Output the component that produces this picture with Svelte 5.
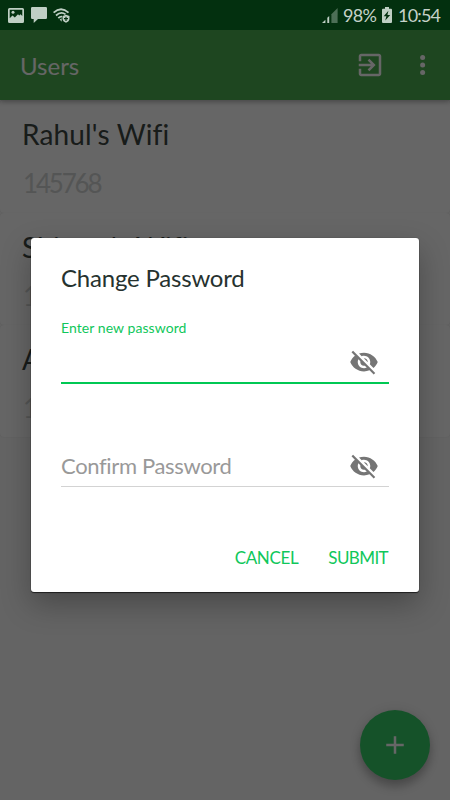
<script lang="ts">
  const users = [
    { name: "Rahul's Wifi", code: '145768' },
    { name: "Shivam's Wifi", code: '145769' },
    { name: "Anil's Wifi", code: '145770' }
  ];

  let password = $state('');
  let confirm = $state('');
</script>

{#snippet eyeOff()}
  <svg class="icon eye" viewBox="0 0 24 24" aria-hidden="true">
    <path d="M12 7c2.76 0 5 2.24 5 5 0 .65-.13 1.26-.36 1.83l2.92 2.92c1.51-1.26 2.7-2.89 3.43-4.75-1.73-4.39-6-7.5-11-7.5-1.4 0-2.74.25-3.98.7l2.16 2.16C10.74 7.13 11.35 7 12 7zM2 4.27l2.28 2.28.46.46C3.08 8.3 1.78 10.02 1 12c1.73 4.39 6 7.5 11 7.5 1.55 0 3.03-.3 4.38-.84l.42.42L19.73 22 21 20.73 3.27 3 2 4.27zM7.53 9.8l1.55 1.55c-.05.21-.08.43-.08.65 0 1.66 1.34 3 3 3 .22 0 .44-.03.65-.08l1.55 1.55c-.67.33-1.41.53-2.2.53-2.76 0-5-2.24-5-5 0-.79.2-1.53.53-2.2zm4.31-.78l3.15 3.15.02-.16c0-1.66-1.34-3-3-3l-.17.01z" />
  </svg>
{/snippet}

<div class="screen">
  <div class="status">
    <svg class="s-image" viewBox="0 0 16 15">
      <path fill-rule="evenodd" d="M1.5 0h13A1.5 1.5 0 0 1 16 1.5v12a1.5 1.5 0 0 1-1.5 1.5h-13A1.5 1.5 0 0 1 0 13.5v-12A1.5 1.5 0 0 1 1.5 0zM1.7 1.7v8.6L4.5 7.6l2.3 2L10 6.2l1.2 1.3 1.3-1.3 1.8 1.9V1.7z" />
      <circle cx="5" cy="4.3" r="1.5" />
    </svg>
    <svg class="s-chat" viewBox="0 0 16 16">
      <path d="M1.2 0h13.6A1.2 1.2 0 0 1 16 1.2v9.6a1.2 1.2 0 0 1-1.2 1.2H7l-4.3 4v-4H1.2A1.2 1.2 0 0 1 0 10.8V1.2A1.2 1.2 0 0 1 1.2 0z" />
    </svg>
    <svg class="s-wifi" viewBox="0 0 17 15">
      <g fill="none" stroke="#bfcfc4" stroke-width="1.8">
        <path d="M.6 4.6Q8-2.2 15.5 4.6" />
        <path d="M3 7.5Q8 3 12.5 6.4" />
        <path d="M5.3 10.2Q7 8.4 9 8.7" />
      </g>
      <path d="M6.7 11.5l2-1.2v3.5z" />
      <path fill-rule="evenodd" d="M13 6.8l3.5 1.2v2.8c0 2-1.5 3.3-3.5 4-2-.7-3.5-2-3.5-4V8zM12.4 8.7v1.4H11v1.2h1.4v1.6h1.2v-1.6H15v-1.2h-1.4V8.7z" />
    </svg>

    <div class="status-right">
      <svg class="s-signal" viewBox="0 0 16 15">
        <path d="M0 15l3.4-3.3V15zM5.3 15V9.8l1.9-1.9V15z" />
        <path opacity=".4" d="M9.4 15V6.2L15.6 0v15z" />
      </svg>
      <span class="level">98%</span>
      <svg class="s-battery" viewBox="0 0 10 16">
        <path fill-rule="evenodd" d="M3 0h4v1.7h2a1 1 0 0 1 1 1V15a1 1 0 0 1-1 1H1a1 1 0 0 1-1-1V2.7a1 1 0 0 1 1-1h2zM6.4 3.8L1.7 9.3h2.7l-1.2 4.3 5-5.7H5.4z" />
      </svg>
      <span class="clock">10:54</span>
    </div>
  </div>

  <header class="toolbar">
    <h1>Users</h1>
    <svg class="icon" viewBox="0 0 24 24">
      <path d="M10.09 15.59L11.5 17l5-5-5-5-1.41 1.41L12.67 11H3v2h9.67l-2.58 2.59zM19 3H5c-1.11 0-2 .9-2 2v4h2V5h14v14H5v-4H3v4c0 1.1.89 2 2 2h14c1.1 0 2-.9 2-2V5c0-1.1-.9-2-2-2z" />
    </svg>
    <svg class="icon more" viewBox="0 0 24 24">
      <circle cx="11.7" cy="6" r="2" />
      <circle cx="11.7" cy="12" r="2" />
      <circle cx="11.7" cy="18" r="2" />
    </svg>
  </header>

  <main>
    {#each users as user}
      <div class="card">
        <div class="name">{user.name}</div>
        <div class="code">{user.code}</div>
      </div>
    {/each}
  </main>

  <button class="fab" aria-label="Add user">
    <svg class="icon" viewBox="0 0 24 24"><path d="M19 13h-6v6h-2v-6H5v-2h6V5h2v6h6z" /></svg>
  </button>

  <div class="scrim">
    <div class="dialog">
      <h2>Change Password</h2>
      <label class="caption" for="pw">Enter new password</label>
      <div class="field focused">
        <input id="pw" type="password" bind:value={password} />
        {@render eyeOff()}
      </div>
      <div class="field second">
        <input type="password" placeholder="Confirm Password" bind:value={confirm} />
        {@render eyeOff()}
      </div>
      <div class="actions">
        <button class="cancel">CANCEL</button>
        <button class="submit">SUBMIT</button>
      </div>
    </div>
  </div>
</div>

<style>
  .screen {
    position: relative;
    width: 450px;
    height: 800px;
    overflow: hidden;
    background: #f9f9f9;
    font-family: Lato, 'Open Sans', sans-serif;
  }

  h1, h2 { margin: 0; font-weight: 400; }
  svg { display: block; flex: none; }
  button { border: 0; padding: 0; background: none; color: inherit; font: inherit; }
  .icon { width: 30px; height: 30px; }

  .status {
    position: relative;
    z-index: 3;
    display: flex;
    align-items: center;
    height: 30px;
    box-sizing: border-box;
    padding: 0 10px 0 8px;
    background: #03300f;
    color: #c5d2c9;
    fill: #bfcfc4;
    font-size: 18px;
    line-height: 30px;
  }
  .s-image { width: 16px; height: 15px; }
  .s-chat { width: 16px; height: 16px; margin-left: 7px; }
  .s-wifi { width: 17px; height: 15px; margin-left: 6px; }
  .status-right { display: flex; align-items: center; margin-left: auto; }
  .s-signal { width: 16px; height: 15px; margin-right: 5px; }
  .level { width: 39px; letter-spacing: -0.7px; }
  .s-battery { width: 10px; height: 16px; margin-right: 6px; }
  .clock { width: 42px; letter-spacing: -0.8px; white-space: nowrap; }

  .toolbar {
    position: relative;
    z-index: 1;
    display: flex;
    align-items: center;
    height: 70px;
    box-sizing: border-box;
    padding: 0 12px 0 20px;
    background: #4caf50;
    color: #fff;
    fill: #fff;
    box-shadow: 0 2px 5px rgba(0, 0, 0, 0.3);
  }
  .toolbar h1 { flex: 1; padding-top: 2px; font-size: 24px; line-height: 30px; }
  .more { margin-left: 23px; }

  .card {
    height: 112px;
    box-sizing: border-box;
    padding: 16px 22px 0;
    border-radius: 4px;
    background: #fff;
    box-shadow: 0 0 1px rgba(0, 0, 0, 0.12);
  }
  .card:first-child { height: 113px; }
  .name { color: #3c4643; font-size: 28px; line-height: 36px; letter-spacing: 0.15px; }
  .code { margin-top: 14px; padding-left: 1px; color: #d2d5d4; font-size: 26px; line-height: 34px; letter-spacing: -2.2px; }

  .fab {
    position: absolute;
    right: 20px;
    bottom: 20px;
    display: grid;
    place-items: center;
    width: 70px;
    height: 70px;
    border-radius: 50%;
    background: #35cd68;
    fill: #fff;
    box-shadow: 0 7px 10px rgba(0, 0, 0, 0.22), 0 1px 12px rgba(0, 0, 0, 0.12);
  }

  .scrim {
    position: absolute;
    inset: 0;
    z-index: 2;
    display: flex;
    justify-content: center;
    align-items: flex-start;
    padding-top: 238px;
    background: rgba(0, 0, 0, 0.6);
  }

  .dialog {
    width: 388px;
    height: 354px;
    box-sizing: border-box;
    padding: 24px 30px 0 30px;
    border-radius: 3px;
    background: #fff;
    box-shadow: 0 1px 1px rgba(0, 0, 0, 0.6), 0 0 1px rgba(0, 0, 0, 0.6), 0 12px 30px rgba(0, 0, 0, 0.28);
  }
  h2 { color: #26322f; font-size: 24px; line-height: 32px; letter-spacing: -0.2px; }
  .caption { display: block; margin-top: 24px; color: #10c75b; font-size: 14px; line-height: 20px; letter-spacing: 0.07px; }

  .field { display: flex; align-items: center; height: 44px; border-bottom: 1px solid #d3d3d3; }
  .field.focused { height: 40px; padding-top: 4px; border-bottom: 2px solid #00c853; }
  .field.second { margin-top: 60px; height: 42px; }
  input {
    flex: 1;
    min-width: 0;
    border: 0;
    padding: 0;
    outline: none;
    background: none;
    font-family: inherit;
    font-size: 22px;
    letter-spacing: -0.35px;
  }
  input::placeholder { color: #999; opacity: 1; }
  .eye { margin-right: 10.5px; fill: #757575; }
  .second .eye { margin-top: 2px; }

  .actions {
    display: flex;
    justify-content: flex-end;
    gap: 30px;
    margin-top: 58px;
    padding-right: 1px;
    color: #10c75b;
    font-size: 17px;
    line-height: 26px;
  }
  .cancel { letter-spacing: -0.35px; }
  .submit { letter-spacing: -0.6px; }
</style>
